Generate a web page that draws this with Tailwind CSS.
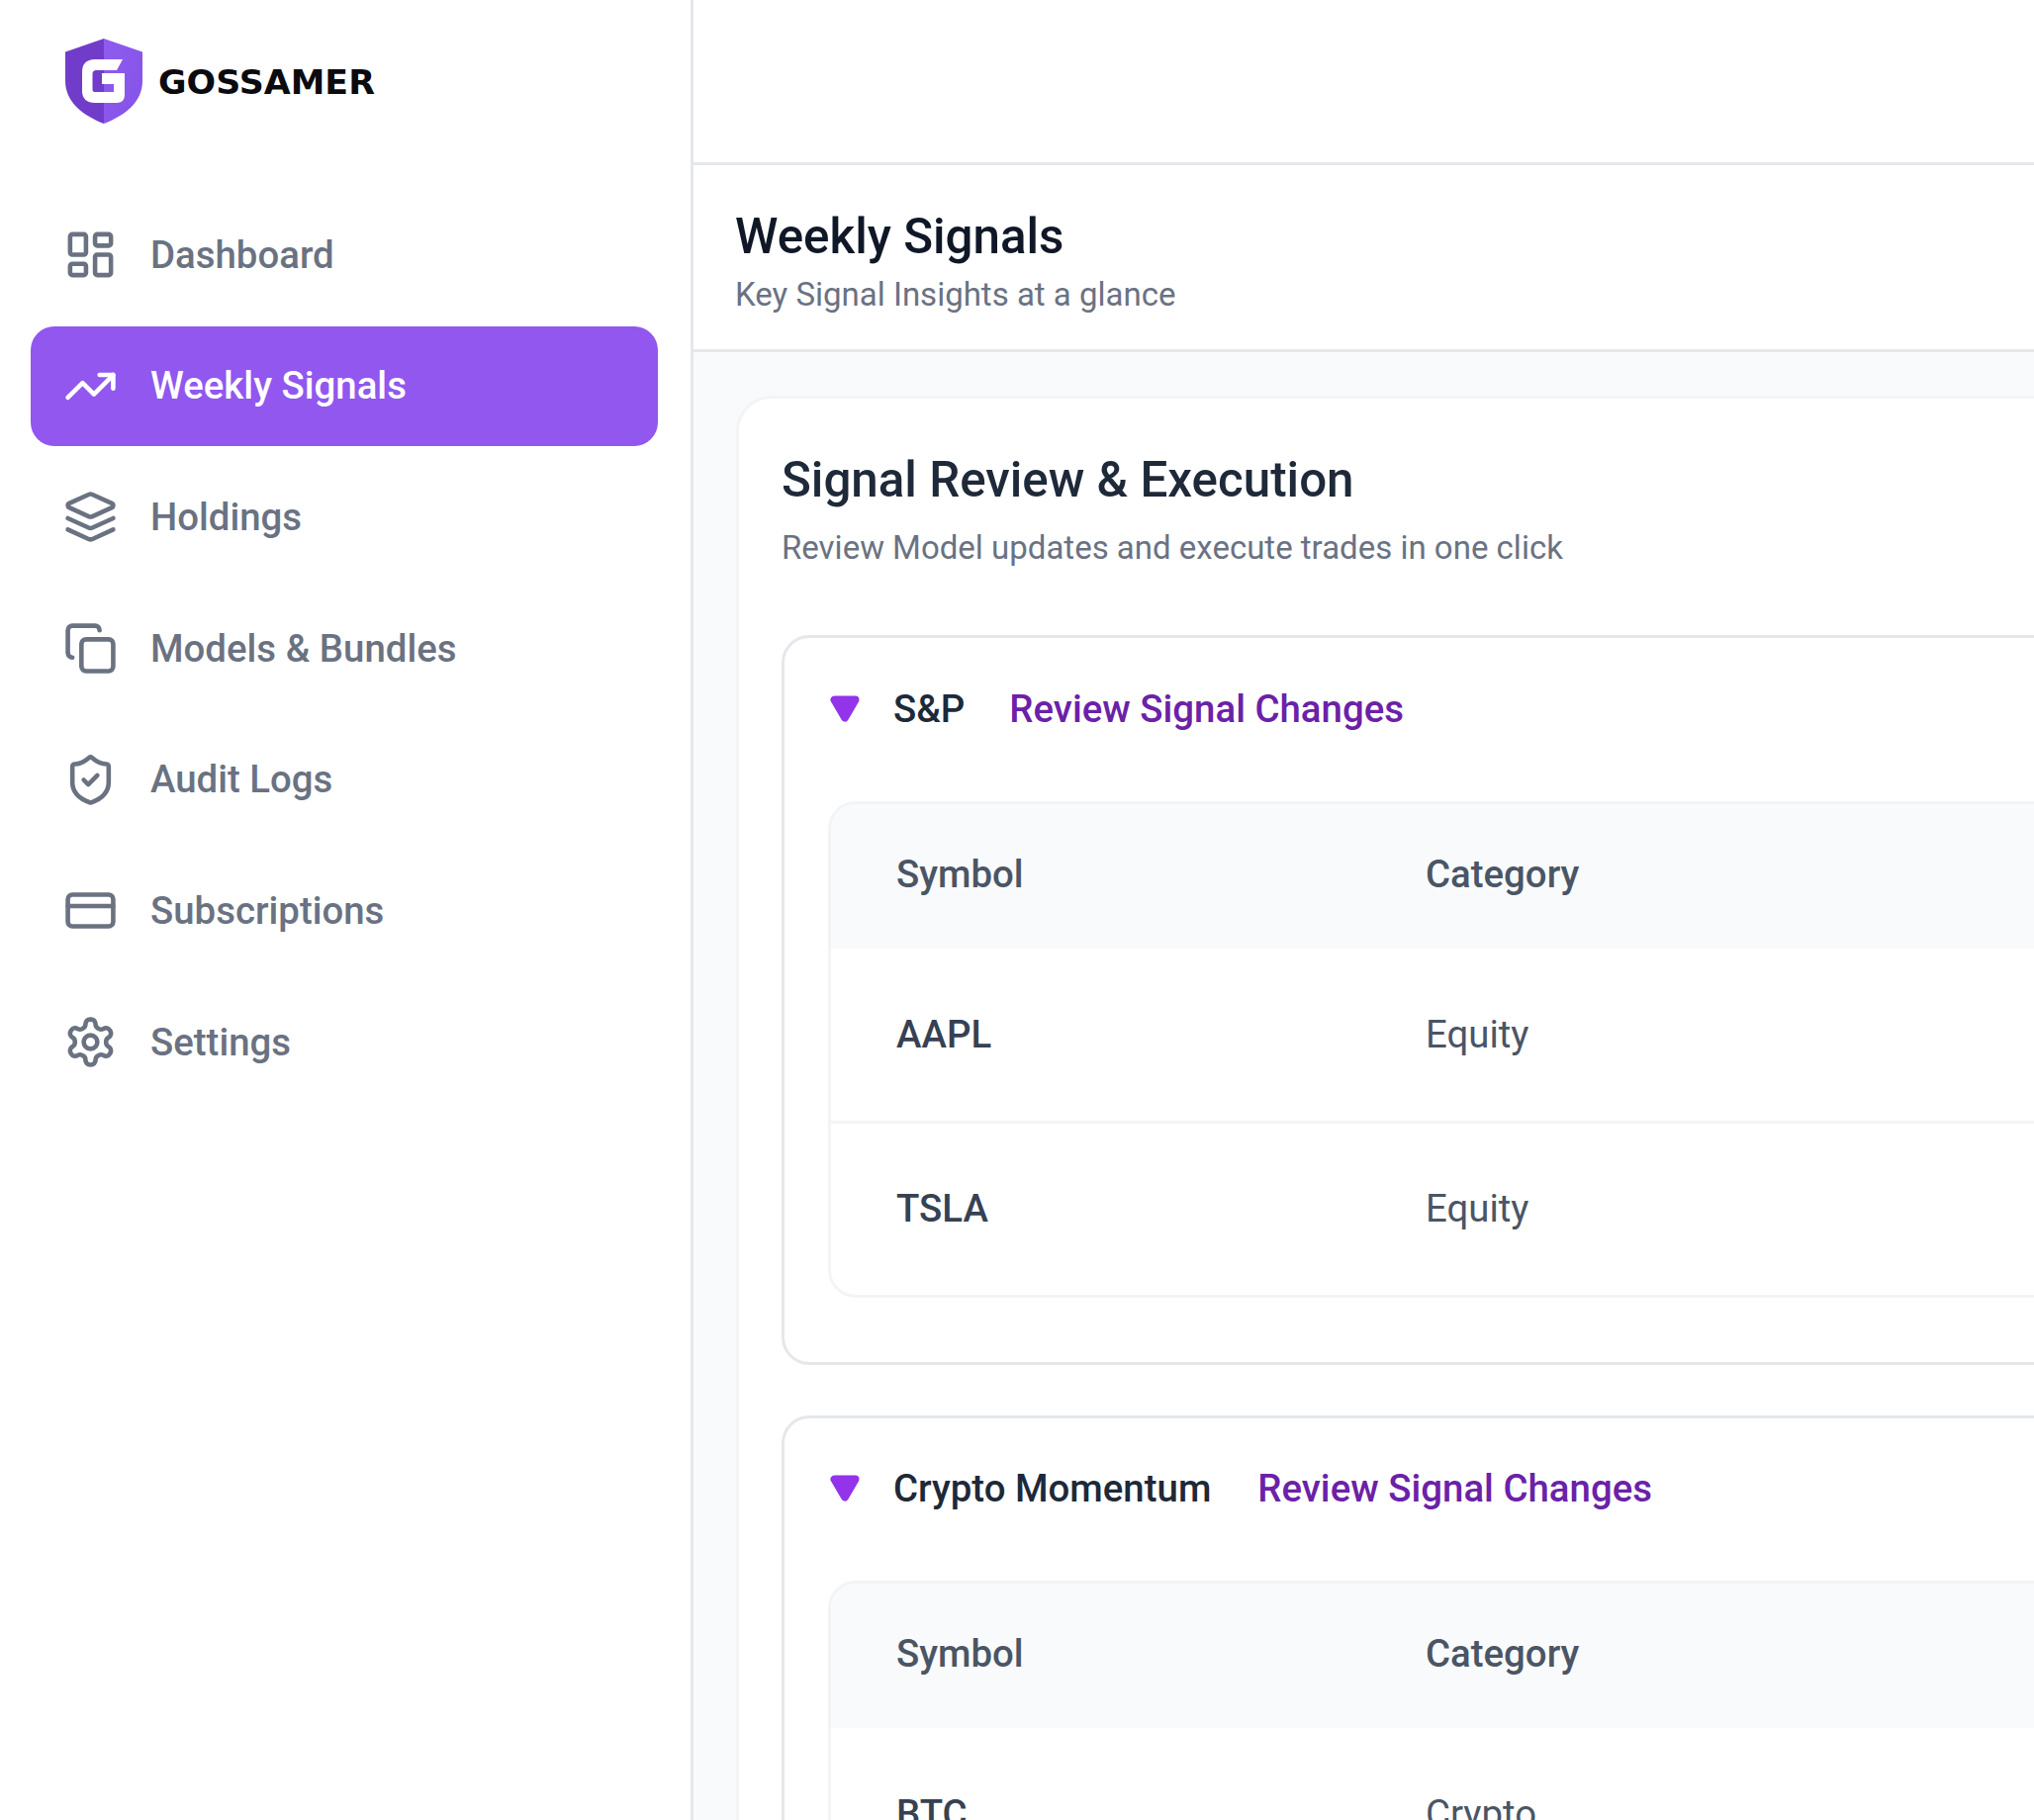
<!DOCTYPE html>
<html lang="en">
<head>
<meta charset="utf-8">
<title>Gossamer</title>
<script src="https://cdn.jsdelivr.net/npm/@tailwindcss/browser@4"></script>
</head>
<body class="m-0 bg-white font-['Roboto',sans-serif]">
<div class="flex h-[1840px] w-[2056px] overflow-hidden bg-white">
  <aside class="h-full w-[701px] shrink-0 border-r-[3px] border-gray-200 bg-white">
    <div class="flex h-[197px] items-start pl-[66px] pt-[38px]">
      <svg class="h-[88px] w-[80px] shrink-0" viewBox="0 0 80 88">
        <defs><linearGradient id="sr" x1="0" x2="1" y1="0" y2="1"><stop offset="0" stop-color="#8f5cf0"/><stop offset="1" stop-color="#8452e6"/></linearGradient></defs>
        <path d="M39 1 L78 14.5 V44 C78 65 60 79 39 87 Z" fill="url(#sr)"/>
        <path d="M39 1 L0 14.5 V44 C0 65 18 79 39 87 Z" fill="#713cc9"/>
        <path d="M58 22 H30 C21 22 17 27 17 35 V54 C17 62 22 66 30 66 H52 C57 66 60 63 60 58 V36 H37 V47 H49 V55 H30 C28 55 27.5 54 27.5 52 V37 C27.5 34 29 33 31 33 H52 Z" fill="#fff"/>
      </svg>
      <span class="ml-[14px] mt-[23px] inline-block origin-left scale-x-[1.055] font-['DejaVu_Sans',sans-serif] text-[33px] font-bold leading-[46px] text-[#0b0b0f]">GOSSAMER</span>
    </div>
    <nav class="flex flex-col gap-[11.7px] pl-[31px] pr-[33px] font-medium text-[38.4px] text-gray-500">
      <a class="flex h-[121px] items-center gap-[33px] rounded-[24px] pl-[33px]">
        <svg class="h-[55px] w-[55px] shrink-0" viewBox="0 0 24 24" fill="none" stroke="currentColor" stroke-width="2" stroke-linecap="round" stroke-linejoin="round"><rect width="7" height="9" x="3" y="3" rx="1"/><rect width="7" height="5" x="14" y="3" rx="1"/><rect width="7" height="9" x="14" y="12" rx="1"/><rect width="7" height="5" x="3" y="16" rx="1"/></svg>
        <span>Dashboard</span>
      </a>
      <a class="flex h-[121px] items-center gap-[33px] rounded-[24px] bg-[#9157ef] pl-[33px] text-white">
        <svg class="h-[55px] w-[55px] shrink-0" viewBox="0 0 24 24" fill="none" stroke="currentColor" stroke-width="2" stroke-linecap="round" stroke-linejoin="round"><polyline points="22 7 13.5 15.5 8.5 10.5 2 17"/><polyline points="16 7 22 7 22 13"/></svg>
        <span>Weekly Signals</span>
      </a>
      <a class="flex h-[121px] items-center gap-[33px] rounded-[24px] pl-[33px]">
        <svg class="h-[55px] w-[55px] shrink-0" viewBox="0 0 24 24" fill="none" stroke="currentColor" stroke-width="2" stroke-linecap="round" stroke-linejoin="round"><path d="m12.83 2.18a2 2 0 0 0-1.66 0L2.6 6.08a1 1 0 0 0 0 1.83l8.58 3.91a2 2 0 0 0 1.66 0l8.58-3.9a1 1 0 0 0 0-1.83Z"/><path d="m22 17.65-9.17 4.16a2 2 0 0 1-1.66 0L2 17.65"/><path d="m22 12.65-9.17 4.16a2 2 0 0 1-1.66 0L2 12.65"/></svg>
        <span>Holdings</span>
      </a>
      <a class="flex h-[121px] items-center gap-[33px] rounded-[24px] pl-[33px]">
        <svg class="h-[55px] w-[55px] shrink-0" viewBox="0 0 24 24" fill="none" stroke="currentColor" stroke-width="2" stroke-linecap="round" stroke-linejoin="round"><rect width="14" height="14" x="8" y="8" rx="2"/><path d="M4 16c-1.1 0-2-.9-2-2V4c0-1.1.9-2 2-2h10c1.1 0 2 .9 2 2"/></svg>
        <span>Models &amp; Bundles</span>
      </a>
      <a class="flex h-[121px] items-center gap-[33px] rounded-[24px] pl-[33px]">
        <svg class="h-[55px] w-[55px] shrink-0" viewBox="0 0 24 24" fill="none" stroke="currentColor" stroke-width="2" stroke-linecap="round" stroke-linejoin="round"><path d="M20 13c0 5-3.5 7.5-7.66 8.95a1 1 0 0 1-.67-.01C7.5 20.5 4 18 4 13V6a1 1 0 0 1 1-1c2 0 4.5-1.2 6.24-2.72a1.17 1.17 0 0 1 1.52 0C14.51 3.81 17 5 19 5a1 1 0 0 1 1 1z"/><path d="m9 12 2 2 4-4"/></svg>
        <span>Audit Logs</span>
      </a>
      <a class="flex h-[121px] items-center gap-[33px] rounded-[24px] pl-[33px]">
        <svg class="h-[55px] w-[55px] shrink-0" viewBox="0 0 24 24" fill="none" stroke="currentColor" stroke-width="2" stroke-linecap="round" stroke-linejoin="round"><rect width="20" height="14" x="2" y="5" rx="2"/><line x1="2" x2="22" y1="10" y2="10"/></svg>
        <span>Subscriptions</span>
      </a>
      <a class="flex h-[121px] items-center gap-[33px] rounded-[24px] pl-[33px]">
        <svg class="h-[55px] w-[55px] shrink-0" viewBox="0 0 24 24" fill="none" stroke="currentColor" stroke-width="2" stroke-linecap="round" stroke-linejoin="round"><path d="M12.22 2h-.44a2 2 0 0 0-2 2v.18a2 2 0 0 1-1 1.73l-.43.25a2 2 0 0 1-2 0l-.15-.08a2 2 0 0 0-2.73.73l-.22.38a2 2 0 0 0 .73 2.73l.15.1a2 2 0 0 1 1 1.72v.51a2 2 0 0 1-1 1.74l-.15.09a2 2 0 0 0-.73 2.73l.22.38a2 2 0 0 0 2.73.73l.15-.08a2 2 0 0 1 2 0l.43.25a2 2 0 0 1 1 1.73V20a2 2 0 0 0 2 2h.44a2 2 0 0 0 2-2v-.18a2 2 0 0 1 1-1.73l.43-.25a2 2 0 0 1 2 0l.15.08a2 2 0 0 0 2.73-.73l.22-.39a2 2 0 0 0-.73-2.73l-.15-.08a2 2 0 0 1-1-1.74v-.5a2 2 0 0 1 1-1.74l.15-.09a2 2 0 0 0 .73-2.73l-.22-.38a2 2 0 0 0-2.73-.73l-.15.08a2 2 0 0 1-2 0l-.43-.25a2 2 0 0 1-1-1.73V4a2 2 0 0 0-2-2z"/><circle cx="12" cy="12" r="3"/></svg>
        <span>Settings</span>
      </a>
    </nav>
  </aside>
  <main class="min-w-0 flex-1 bg-[#f9fafb]">
    <div class="h-[167px] border-b-[3px] border-gray-200 bg-white"></div>
    <header class="flex h-[189px] flex-col border-b-[3px] border-gray-200 bg-white pl-[42px] pt-[42px]">
      <h1 class="text-[49.3px] font-medium leading-[60px] text-gray-900">Weekly Signals</h1>
      <p class="mt-[5px] text-[33px] leading-[48px] text-gray-500">Key Signal Insights at a glance</p>
    </header>
    <div class="pl-[43px] pt-[44px]">
      <section class="w-[1500px] rounded-tl-[36px] border-[3px] border-gray-100 bg-white pl-[43px] pt-[50px]">
        <h2 class="text-[49.3px] font-medium leading-[64px] text-gray-800">Signal Review &amp; Execution</h2>
        <p class="mt-[13px] text-[33px] leading-[48px] text-gray-500">Review Model updates and execute trades in one click</p>

        <div class="mt-[64px] w-[1500px] rounded-[28px] border-[3px] border-gray-200 bg-white pb-[65px] pl-[44px]">
          <div class="flex h-[165px] items-center pb-[21px] pl-[2px]">
            <svg class="h-[28px] w-[30px] shrink-0" viewBox="0 0 30 28"><path d="M4.5 4.5 H25.5 L15 22.5 Z" fill="#9333ea" stroke="#9333ea" stroke-width="8" stroke-linejoin="round"/></svg>
            <span class="ml-[34px] text-[38.4px] font-medium text-gray-800">S&amp;P</span>
            <span class="ml-[45px] text-[38.4px] font-medium text-[#6b21a8]">Review Signal Changes</span>
          </div>
          <div class="rounded-[28px] border-[3px] border-gray-100 bg-white">
            <div class="grid h-[146px] grid-cols-[535px_1fr] items-center rounded-t-[25px] bg-[#f9fafb] pb-[4px] pl-[66px] text-[38.4px] font-medium text-gray-600">
              <span>Symbol</span><span>Category</span>
            </div>
            <div class="grid h-[177px] grid-cols-[535px_1fr] items-center border-b-[3px] border-gray-100 pl-[66px] text-[38.4px]">
              <span class="font-medium text-gray-700">AAPL</span><span class="text-gray-600">Equity</span>
            </div>
            <div class="grid h-[173px] grid-cols-[535px_1fr] items-center pb-[2px] pl-[66px] text-[38.4px]">
              <span class="font-medium text-gray-700">TSLA</span><span class="text-gray-600">Equity</span>
            </div>
          </div>
        </div>

        <div class="mt-[51px] w-[1500px] rounded-[28px] border-[3px] border-gray-200 bg-white pb-[65px] pl-[44px]">
          <div class="flex h-[164px] items-center pb-[22px] pl-[2px]">
            <svg class="h-[28px] w-[30px] shrink-0" viewBox="0 0 30 28"><path d="M4.5 4.5 H25.5 L15 22.5 Z" fill="#9333ea" stroke="#9333ea" stroke-width="8" stroke-linejoin="round"/></svg>
            <span class="ml-[34px] text-[38.4px] font-medium text-gray-800">Crypto Momentum</span>
            <span class="ml-[47px] text-[38.4px] font-medium text-[#6b21a8]">Review Signal Changes</span>
          </div>
          <div class="rounded-[28px] border-[3px] border-gray-100 bg-white">
            <div class="grid h-[146px] grid-cols-[535px_1fr] items-center rounded-t-[25px] bg-[#f9fafb] pb-[4px] pl-[66px] text-[38.4px] font-medium text-gray-600">
              <span>Symbol</span><span>Category</span>
            </div>
            <div class="grid h-[177px] grid-cols-[535px_1fr] items-center border-b-[3px] border-gray-100 pl-[66px] text-[38.4px]">
              <span class="font-medium text-gray-700">BTC</span><span class="text-gray-600">Crypto</span>
            </div>
          </div>
        </div>
      </section>
    </div>
  </main>
</div>
</body>
</html>
